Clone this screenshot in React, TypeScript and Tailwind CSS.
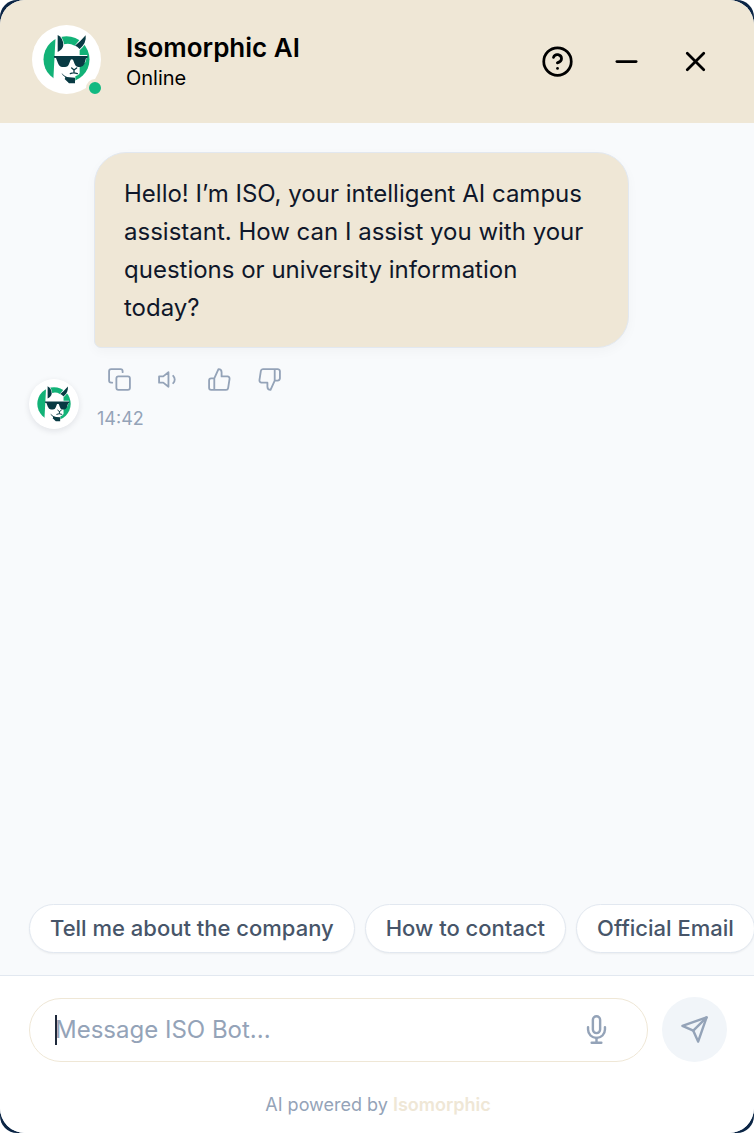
import { useState } from 'react'
import { FiCopy, FiHelpCircle, FiMic, FiMinus, FiSend, FiThumbsDown, FiThumbsUp, FiVolume1, FiX } from 'react-icons/fi'

const SUGGESTIONS = ['Tell me about the company', 'How to contact', 'Official Email']

const HEADER_ACTIONS = [
  { label: 'Help', Icon: FiHelpCircle },
  { label: 'Minimize', Icon: FiMinus },
  { label: 'Close', Icon: FiX },
]

const MESSAGE_ACTIONS = [
  { label: 'Copy', Icon: FiCopy },
  { label: 'Read aloud', Icon: FiVolume1 },
  { label: 'Good response', Icon: FiThumbsUp },
  { label: 'Bad response', Icon: FiThumbsDown },
]

function LlamaLogo({ className }: { className: string }) {
  return (
    <svg viewBox="0 0 207 207" className={className} aria-hidden="true">
      <circle cx="103.5" cy="103.5" r="103.5" fill="#fff" />
      <circle cx="103.5" cy="103" r="69" fill="#12b277" />
      {/* head and neck */}
      <path
        fill="#fff"
        d="M64 164 L71 30 L78 26 Q92 32 96 58 Q112 53 128 62 L158 26 L166 30 Q166 56 143 76 L143 90 L166 90 L160 112 L143 124 L143 145 Q138 153 130 154 L130 180 L64 180 Z"
      />
      {/* ears */}
      <path fill="#083a43" d="M77 30 Q93 38 94 60 Q93 73 77 81 Z" />
      <path fill="#083a43" d="M161 31 Q164 54 143 72 Q135 63 129 62 Q145 50 161 31 Z" />
      {/* sunglasses */}
      <path
        fill="#083a43"
        d="M66 93 H167 V98 L162 100 L157 117 Q153 126 145 126 H138 Q131 126 128 117 L123 104 Q119 102 116 104 L111 117 Q108 126 99 126 H91 Q82 126 78 115 L72 99 L66 98 Z"
      />
      {/* snout */}
      <path
        fill="none"
        stroke="#083a43"
        strokeWidth="4"
        strokeLinecap="round"
        d="M119 129 L126 135 L134 129 M126 135 V142 M115 146 Q124 141 136 146"
      />
      {/* beard */}
      <path fill="#083a43" d="M88 143 Q98 155 112 157 L129 158 V175 H111 L98 162 Q101 159 99 156 Q91 151 88 143 Z" />
    </svg>
  )
}

function App() {
  const [message, setMessage] = useState('')

  return (
    <div className="bg-white font-['Inter',sans-serif]">
      <div className="rounded-[17px] bg-[#0b2545]">
        <div className="flex min-h-screen flex-col overflow-hidden rounded-[25px] bg-[#f8fafc]">
          <header className="flex h-[123px] items-center justify-between bg-[#efe7d6] px-8 text-black">
            <div className="flex items-center gap-[25px]">
              <div className="relative -mt-1">
                <LlamaLogo className="size-[69px]" />
                <span className="absolute -right-[3px] -bottom-[3px] size-[18px] rounded-full border-3 border-[#efe7d6] bg-[#10b981]" />
              </div>
              <div>
                <h1 className="text-[26px] leading-8 font-semibold">Isomorphic AI</h1>
                <p className="text-[20px] leading-7">Online</p>
              </div>
            </div>
            <div className="flex gap-[15px]">
              {HEADER_ACTIONS.map(({ label, Icon }) => (
                <button key={label} type="button" aria-label={label} className="flex size-[54px] items-center justify-center">
                  <Icon className="size-[33px]" />
                </button>
              ))}
            </div>
          </header>

          <main className="flex flex-1 items-start px-[29px] pt-[29px]">
            <div className="flex w-full items-end gap-[15px]">
              <LlamaLogo className="size-[50px] shrink-0 rounded-full shadow-[0_2px_6px_rgba(15,23,42,0.1)]" />
              <div className="max-w-[535px] min-w-0">
                <p className="rounded-[32px] rounded-bl-[7px] border border-[#e2e8f0] bg-[#efe7d6] pt-[22px] pr-8 pb-5 pl-[29px] text-[24px] leading-[38px] text-[#0f172a] shadow-[0_4px_12px_rgba(15,23,42,0.03)]">
                  Hello! I’m ISO, your intelligent AI campus assistant. How can I assist you with your questions or
                  university information today?
                </p>
                <div className="mt-[19px] flex gap-[25px] pl-[13px] text-[#94a3b8]">
                  {MESSAGE_ACTIONS.map(({ label, Icon }) => (
                    <button key={label} type="button" aria-label={label}>
                      <Icon className="size-[25px]" strokeWidth={1.75} />
                    </button>
                  ))}
                </div>
                <time className="mt-[17px] block pl-[3px] text-[18px] leading-5 text-[#94a3b8]">14:42</time>
              </div>
            </div>
          </main>

          <div className="flex gap-[10px] overflow-hidden pb-[22px] pl-[29px]">
            {SUGGESTIONS.map((text) => (
              <button
                key={text}
                type="button"
                className="h-[49px] shrink-0 rounded-full border border-[#e2e8f0] bg-white px-5 pb-[2px] text-[22px] leading-7 font-medium whitespace-nowrap text-[#475569] shadow-xs"
              >
                {text}
              </button>
            ))}
          </div>

          <footer className="border-t border-[#e2e8f0] bg-white pt-[21px] pr-[27px] pb-4 pl-[29px]">
            <form className="flex items-center gap-[14px]" onSubmit={(e) => e.preventDefault()}>
              <div className="relative flex h-16 min-w-0 flex-1 items-center rounded-full border border-[#efe7d6] bg-white pr-9 pl-[25px]">
                {/* caret */}
                {!message && <span className="absolute left-[25px] h-[30px] w-[2px] bg-[#1e293b]" />}
                <input
                  type="text"
                  aria-label="Message"
                  placeholder="Message ISO Bot..."
                  value={message}
                  onChange={(e) => setMessage(e.target.value)}
                  className="min-w-0 flex-1 bg-transparent text-[24px] leading-9 text-[#1e293b] outline-none placeholder:text-[#94a3b8]"
                />
                <button type="button" aria-label="Voice input" className="text-[#94a3b8]">
                  <FiMic className="size-[29px]" />
                </button>
              </div>
              <button
                type="submit"
                aria-label="Send"
                className="flex size-[65px] shrink-0 items-center justify-center rounded-full bg-[#f1f5f9] text-[#94a3b8]"
              >
                <FiSend className="size-[29px]" />
              </button>
            </form>
            <p className="mt-[31px] text-center text-[18px] leading-6 text-[#94a3b8]">
              AI powered by <span className="font-semibold text-[#efe7d6]">Isomorphic</span>
            </p>
          </footer>
        </div>
      </div>
    </div>
  )
}

export default App
